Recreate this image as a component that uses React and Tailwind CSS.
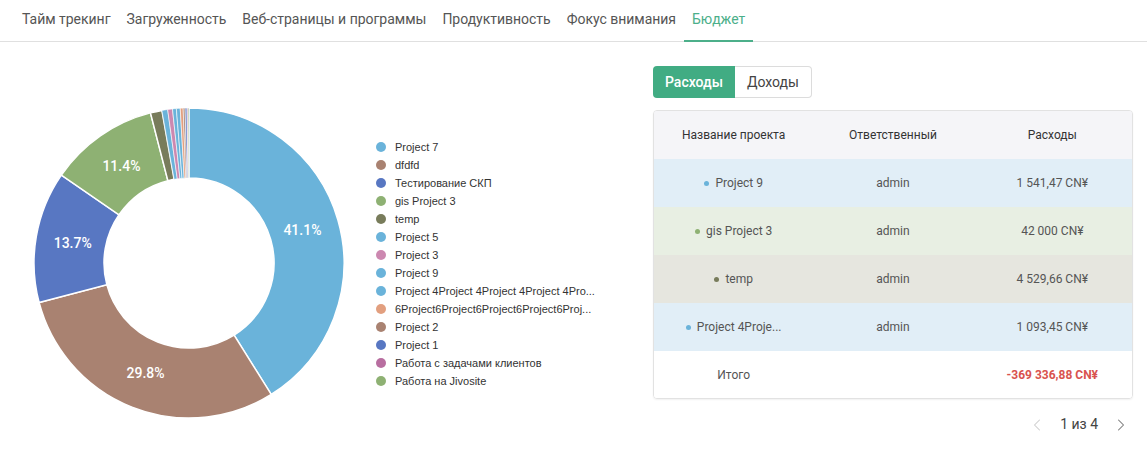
import { ChevronLeft, ChevronRight } from 'lucide-react'

const TABS = ['Тайм трекинг', 'Загруженность', 'Веб-страницы и программы', 'Продуктивность', 'Фокус внимания', 'Бюджет']

const SLICES = [
  { name: 'Project 7', value: 41.1, color: '#6ab3da' },
  { name: 'dfdfd', value: 29.8, color: '#a98271' },
  { name: 'Тестирование СКП', value: 13.7, color: '#5877c2' },
  { name: 'gis Project 3', value: 11.4, color: '#8eb173' },
  { name: 'temp', value: 1.2, color: '#787c5b' },
  { name: 'Project 5', value: 0.6, color: '#6ab3da' },
  { name: 'Project 3', value: 0.5, color: '#cc88b0' },
  { name: 'Project 9', value: 0.4, color: '#6ab3da' },
  { name: 'Project 4Project 4Project 4Project 4Pro...', value: 0.4, color: '#6ab3da' },
  { name: '6Project6Project6Project6Project6Proj...', value: 0.3, color: '#e29f7f' },
  { name: 'Project 2', value: 0.2, color: '#a98271' },
  { name: 'Project 1', value: 0.2, color: '#5877c2' },
  { name: 'Работа с задачами клиентов', value: 0.1, color: '#b86ea0' },
  { name: 'Работа на Jivosite', value: 0.1, color: '#8eb173' },
]

const ROWS = [
  { name: 'Project 9', dot: '#6ab3da', bg: 'bg-[#e1eef7]', user: 'admin', sum: '1 541,47 CN¥' },
  { name: 'gis Project 3', dot: '#8eb173', bg: 'bg-[#e8efe3]', user: 'admin', sum: '42 000 CN¥' },
  { name: 'temp', dot: '#787c5b', bg: 'bg-[#e6e6df]', user: 'admin', sum: '4 529,66 CN¥' },
  { name: 'Project 4Proje...', dot: '#6ab3da', bg: 'bg-[#e1eef7]', user: 'admin', sum: '1 093,45 CN¥' },
]

function Donut() {
  const cx = 189, cy = 263, R = 155, r = 85
  const total = SLICES.reduce((s, x) => s + x.value, 0)
  let acc = 0
  const pt = (rad, a) => [cx + rad * Math.sin(a), cy - rad * Math.cos(a)]
  return (
    <svg width="380" height="454" className="block">
      {SLICES.map(s => {
        const a0 = (acc / total) * Math.PI * 2
        acc += s.value
        const a1 = (acc / total) * Math.PI * 2
        const large = a1 - a0 > Math.PI ? 1 : 0
        const [x0, y0] = pt(R, a0)
        const [x1, y1] = pt(R, a1)
        const [x2, y2] = pt(r, a1)
        const [x3, y3] = pt(r, a0)
        const d = `M${x0} ${y0} A${R} ${R} 0 ${large} 1 ${x1} ${y1} L${x2} ${y2} A${r} ${r} 0 ${large} 0 ${x3} ${y3}Z`
        return <path key={s.name} d={d} fill={s.color} stroke="#fff" strokeWidth={s.value > 1 ? 1.5 : 0.6} />
      })}
      {(() => {
        let a = 0
        return SLICES.map(s => {
          const mid = ((a + s.value / 2) / total) * Math.PI * 2
          a += s.value
          if (s.value < 5) return null
          const [x, y] = pt(118, mid)
          return (
            <text key={s.name} x={x} y={y + 5} textAnchor="middle" fill="#fff" fontSize="14" fontWeight="500" fontFamily="Roboto, 'Liberation Sans', sans-serif">
              {s.value.toFixed(1)}%
            </text>
          )
        })
      })()}
    </svg>
  )
}

export default function App() {
  return (
    <div className="w-[1147px] h-[454px] bg-white overflow-hidden font-['Roboto','Liberation_Sans',sans-serif]">
      {/* Tabs */}
      <div className="flex h-[42px] border-b border-[#e0e0e0] pl-[14px]">
        {TABS.map((t, i) => (
          <div
            key={t}
            className={`px-2 h-[42px] flex items-center text-[14px] -mb-px border-b-2 ${
              i === TABS.length - 1 ? 'text-[#4caf8a] border-[#4caf8a]' : 'text-[#555] border-transparent'
            }`}
          >
            <span className="-mt-[2px] tracking-[-0.02px]">{t}</span>
          </div>
        ))}
      </div>

      <div className="flex">
        {/* Chart + legend */}
        <div className="relative w-[653px] h-[412px] -mt-[42px]">
          <Donut />
          <div className="absolute left-[376px] top-[138px] flex flex-col font-['Liberation_Sans',Arial,sans-serif] text-[11px] text-[#333]">
            {SLICES.map(s => (
              <div key={s.name} className="h-[18px] flex items-center gap-[9px]">
                <span className="w-[10px] h-[10px] rounded-full" style={{ background: s.color }} />
                <span>{s.name}</span>
              </div>
            ))}
          </div>
        </div>

        {/* Budget table */}
        <div className="w-[480px] pt-[24px]">
          <div className="flex">
            <button className="h-[32px] px-[12px] rounded-l-[4px] bg-[#41ac83] text-white text-[14px] font-medium">Расходы</button>
            <button className="h-[32px] px-[12px] rounded-r-[4px] border border-l-0 border-[#dcdcdc] text-[#444] text-[14px]">Доходы</button>
          </div>
          <div className="mt-[12px] border border-[#e2e2e2] rounded-[4px] overflow-hidden shadow-[0_1px_2px_rgba(0,0,0,0.06)]">
            <div className="grid grid-cols-3 h-[48px] items-center bg-[#f5f5f8] text-[12px] text-[#333] text-center">
              <div>Название проекта</div>
              <div>Ответственный</div>
              <div>Расходы</div>
            </div>
            {ROWS.map(row => (
              <div key={row.name} className={`grid grid-cols-3 h-[48px] items-center text-[12px] text-[#555] text-center ${row.bg}`}>
                <div className="flex items-center justify-center gap-[6px]">
                  <span className="w-[5px] h-[5px] rounded-full" style={{ background: row.dot }} />
                  <span>{row.name}</span>
                </div>
                <div>{row.user}</div>
                <div>{row.sum}</div>
              </div>
            ))}
            <div className="grid grid-cols-3 h-[47px] items-center text-[12px] text-center bg-white">
              <div className="text-[#555]">Итого</div>
              <div />
              <div className="text-[#d9534f] font-bold">-369 336,88 CN¥</div>
            </div>
          </div>
          <div className="flex justify-end items-center mt-[15px] pr-[2px] text-[14px] text-[#444]">
            <ChevronLeft className="w-[20px] h-[20px] text-[#ccc]" strokeWidth={1.25} />
            <span className="mx-[13px]">1 из 4</span>
            <ChevronRight className="w-[20px] h-[20px] text-[#777]" strokeWidth={1.25} />
          </div>
        </div>
      </div>
    </div>
  )
}
